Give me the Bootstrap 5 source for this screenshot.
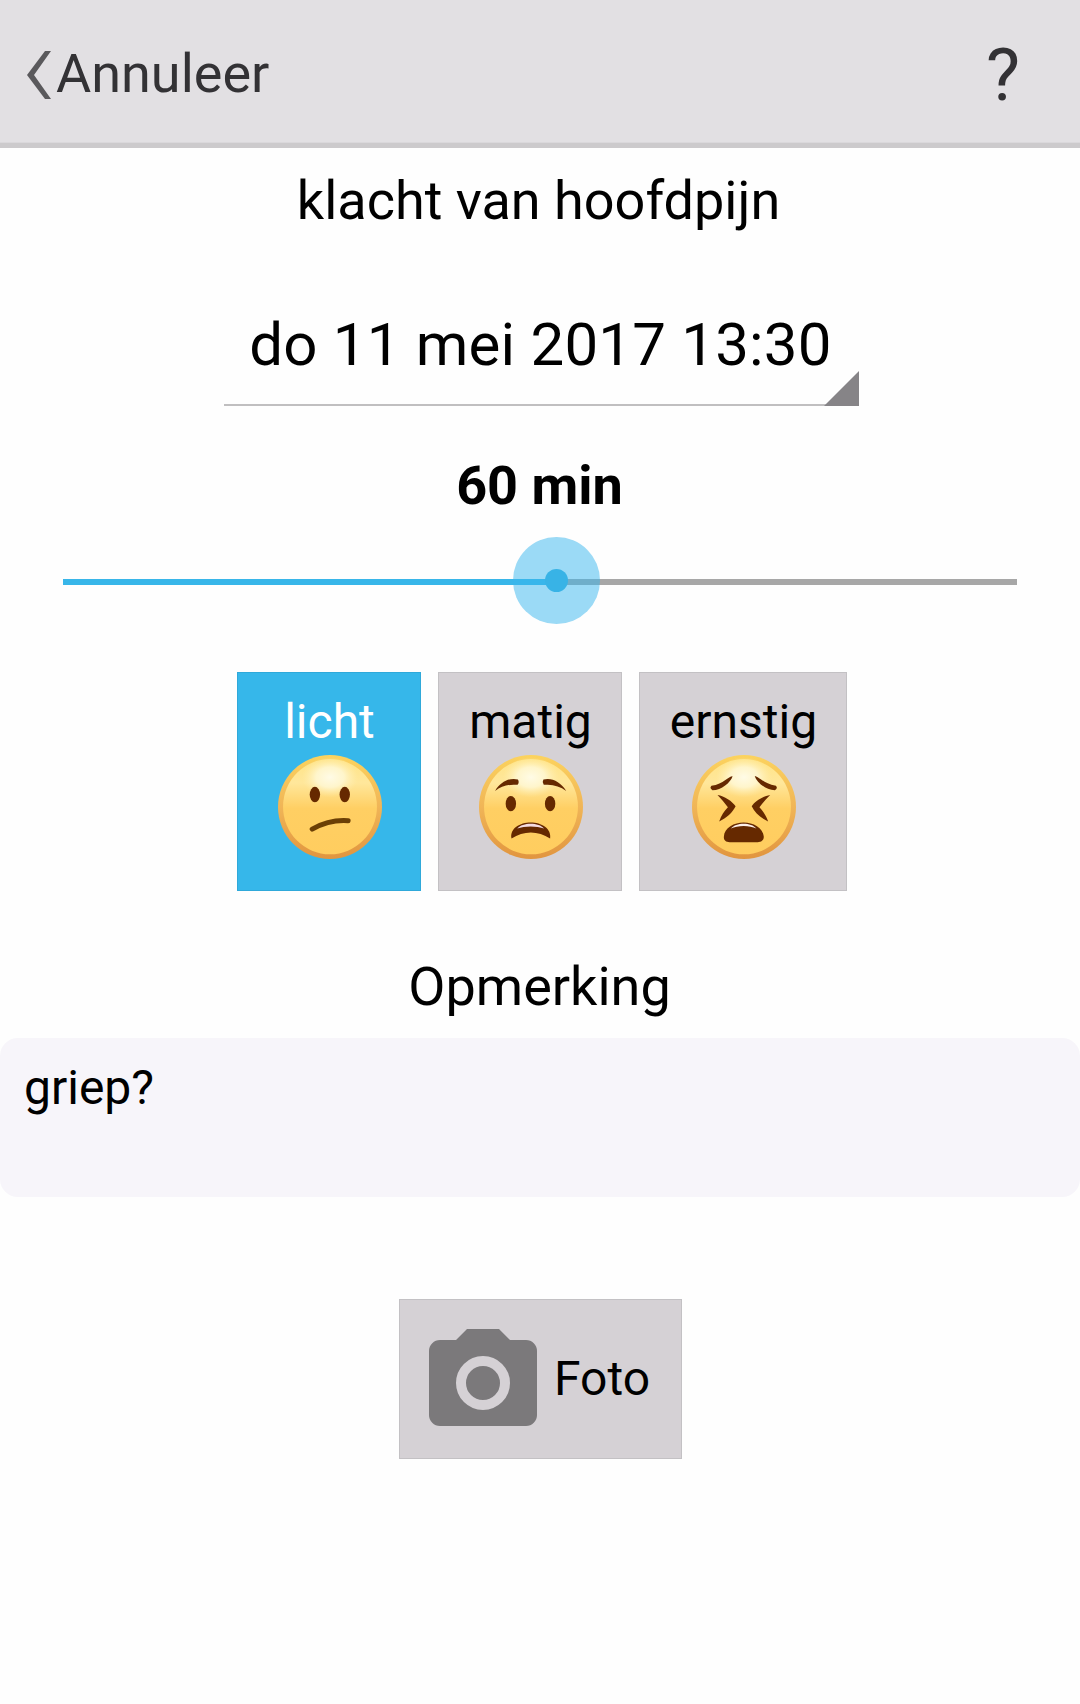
<!DOCTYPE html>
<html lang="nl">
<head>
    <meta charset="UTF-8">
    <meta name="viewport" content="width=device-width, initial-scale=1.0">
    <title>klacht van hoofdpijn</title>
    <link href="https://cdn.jsdelivr.net/npm/bootstrap@5.3.0/dist/css/bootstrap.min.css" rel="stylesheet">
    <style>
        body {
            font-family: Roboto, "Liberation Sans", sans-serif;
            font-size: 48px;
            line-height: 60px;
            color: #000;
            background-color: #fefefe;
            overflow: hidden;
        }
        .topbar {
            height: 148px;
            padding: 0 60px 0 26px;
            background-color: #e2e0e3;
            border-bottom: 5px solid #cccacc;
            box-shadow: inset 0 -1px 0 #dad8db;
            color: #333235;
        }
        .back-link {
            font-size: 54px;
            color: inherit;
            padding-top: 4px;
        }
        .back-link svg {
            margin: 2px 4px 0 0;
        }
        .help-link {
            font-size: 72px;
            color: inherit;
            padding-top: 9px;
        }
        .entry-title {
            font-size: 54px;
            line-height: 106px;
            padding-right: 3px;
        }
        .date-spinner {
            width: 635px;
            height: 152px;
            padding: 54px 2px 23px 0;
            margin-left: 3px;
            font-size: 60px;
            line-height: 73px;
            letter-spacing: .2px;
            border: 0;
            border-bottom: 2px solid #c0bfc0;
            background: none;
        }
        .date-spinner svg {
            right: 0;
            bottom: -2px;
        }
        .duration {
            font-size: 54px;
            line-height: 87px;
            margin-top: 36px;
            padding-right: 1px;
        }
        .slider {
            height: 87px;
            margin-top: 8px;
            padding: 3px 63px 0;
        }
        .slider .progress {
            height: 6px;
            border-radius: 0;
            background-color: #a7a7a7;
            overflow: visible;
        }
        .slider .progress-bar {
            background-color: #38b6e9;
            overflow: visible;
        }
        .thumb {
            right: -44px;
            top: -42px;
            width: 87px;
            height: 87px;
            border-radius: 50%;
            background-color: rgba(56, 182, 238, .5);
        }
        .thumb::after {
            content: "";
            width: 23px;
            height: 23px;
            border-radius: 50%;
            background-color: #38b3e6;
        }
        .severity {
            gap: 17px;
            margin-top: 48px;
            padding-left: 3px;
        }
        .tile {
            border: 1px solid #c3c1c4;
            border-radius: 0;
            background-color: #d5d1d5;
            color: #000;
            font-size: 48px;
            line-height: 60px;
            padding: 0;
        }
        .severity .tile {
            width: 184px;
            height: 219px;
            padding: 19px 0 0 2px;
        }
        .severity .tile-wide {
            width: 208px;
        }
        .severity .tile.active {
            background-color: #36b7ea;
            border-color: #2fa9da;
            color: #fff;
        }
        .face {
            width: 104px;
            height: 104px;
            margin: 3px 0 0 1px;
        }
        .note-label {
            font-size: 54px;
            line-height: 80px;
            margin-top: 56px;
            padding-right: 1px;
        }
        .note-field {
            height: 159px;
            margin-top: 11px;
            padding: 20px 24px;
            border: 0;
            border-radius: 18px;
            background-color: #f7f5fa;
            color: #000;
            font-size: 48px;
            line-height: 60px;
            resize: none;
        }
        .photo-btn {
            width: 283px;
            height: 160px;
            margin-top: 102px;
            padding-right: 1px;
            gap: 17px;
        }
        .photo-btn svg {
            margin-bottom: 3px;
        }
    </style>
</head>
<body>
    <!-- gradients and face shape shared by the severity icons -->
    <svg class="position-absolute" width="0" height="0" aria-hidden="true">
        <defs>
            <linearGradient id="rim" x1="0" y1="0" x2="0" y2="1">
                <stop offset="0" stop-color="#fcd35e"/>
                <stop offset=".5" stop-color="#f0b557"/>
                <stop offset="1" stop-color="#e1953f"/>
            </linearGradient>
            <linearGradient id="skin" x1="0" y1="0" x2="0" y2="1">
                <stop offset="0" stop-color="#ffe487"/>
                <stop offset=".25" stop-color="#ffe79b"/>
                <stop offset=".52" stop-color="#ffcf63"/>
                <stop offset="1" stop-color="#ffcd5f"/>
            </linearGradient>
            <radialGradient id="shine">
                <stop offset="0" stop-color="#fffbe6"/>
                <stop offset=".5" stop-color="#fff8d5" stop-opacity=".85"/>
                <stop offset="1" stop-color="#ffeeb0" stop-opacity="0"/>
            </radialGradient>
            <symbol id="head" viewBox="0 0 310 310">
                <circle cx="155" cy="155" r="155" fill="url(#rim)"/>
                <ellipse cx="155" cy="154" rx="140" ry="142" fill="url(#skin)"/>
                <ellipse cx="155" cy="66" rx="84" ry="60" fill="url(#shine)"/>
            </symbol>
        </defs>
    </svg>

    <nav class="topbar d-flex align-items-center justify-content-between">
        <a href="#" class="back-link d-flex align-items-center text-decoration-none">
            <svg width="26" height="48" viewBox="0 0 26 48"><path d="M19 0h6L8 24l17 24h-6L1 24z" fill="#5a595c"/></svg>
            <span>Annuleer</span>
        </a>
        <a href="#" class="help-link text-decoration-none">?</a>
    </nav>

    <main class="d-flex flex-column align-items-center">
        <div class="entry-title">klacht van hoofdpijn</div>

        <button type="button" class="date-spinner position-relative text-center text-nowrap">
            do 11 mei 2017 13:30
            <svg class="position-absolute" width="35" height="35" viewBox="0 0 35 35"><path d="M35 0v35H0z" fill="#868487"/></svg>
        </button>

        <div class="duration fw-bold">60 min</div>
        <div class="slider w-100 d-flex flex-column justify-content-center">
            <div class="progress">
                <div class="progress-bar position-relative" style="width: 51.7%">
                    <span class="thumb position-absolute d-flex align-items-center justify-content-center"></span>
                </div>
            </div>
        </div>

        <div class="severity d-flex">
            <button type="button" class="btn tile active d-flex flex-column align-items-center">
                <span>licht</span>
                <svg class="face" viewBox="0 0 310 310">
                    <use href="#head"/>
                    <g fill="#662900">
                        <ellipse cx="110" cy="118" rx="15.500" ry="23"/>
                        <ellipse cx="199" cy="118" rx="15.500" ry="23"/>
                    </g>
                    <path d="M102 221Q154 192 209 196" fill="none" stroke="#6b3f05" stroke-width="15" stroke-linecap="round"/>
                </svg>
            </button>
            <button type="button" class="btn tile d-flex flex-column align-items-center">
                <span>matig</span>
                <svg class="face" viewBox="0 0 310 310">
                    <use href="#head"/>
                    <g fill="#662900">
                        <path d="M48 107C64 80 92 66 116 73Q121 81 115 89C89 86 67 93 48 107z"/>
                        <path d="M260 107C244 80 216 66 192 73Q187 81 193 89C219 86 241 93 260 107z"/>
                        <ellipse cx="95" cy="145" rx="15.500" ry="23"/>
                        <ellipse cx="212" cy="145" rx="15.500" ry="23"/>
                        <path d="M97 249C91 219 122 201 154 201S217 219 212 249C176 225 133 225 97 249z"/>
                    </g>
                    <path d="M114 219C130 200 178 200 194 219C172 211 136 211 114 219z" fill="#f5dce2"/>
                </svg>
            </button>
            <button type="button" class="btn tile tile-wide d-flex flex-column align-items-center">
                <span>ernstig</span>
                <svg class="face" viewBox="0 0 310 310">
                    <use href="#head"/>
                    <g fill="#662900">
                        <path d="M121 63C108 63 95 86 58 92Q51 99 61 105C88 104 115 82 121 63z"/>
                        <path d="M187 63C200 63 213 86 250 92Q257 99 247 105C220 104 193 82 187 63z"/>
                        <path d="M76 119C96 122 121 138 130 153C121 172 103 188 81 198C87 181 96 167 107 156C98 143 87 130 76 119z"/>
                        <path d="M233 119C213 122 187 138 178 153C187 172 205 188 227 198C221 181 212 167 201 156C210 143 222 130 233 119z"/>
                        <path d="M95 244C96 216 126 201 154 201S212 216 214 244C214 255 206 260 196 260H112C102 260 94 255 95 244z"/>
                    </g>
                    <path d="M116 219C132 200 176 200 192 219C172 209 136 209 116 219z" fill="#fdf0ea"/>
                </svg>
            </button>
        </div>

        <label for="note" class="note-label">Opmerking</label>
        <textarea id="note" class="note-field form-control">griep?</textarea>

        <button type="button" class="btn tile photo-btn d-flex align-items-center justify-content-center">
            <svg width="108" height="97" viewBox="0 0 108 97">
                <path d="M38 0h32l11 11h16a11 11 0 0 1 11 11v64a11 11 0 0 1-11 11H11A11 11 0 0 1 0 86V22a11 11 0 0 1 11-11h16z" fill="#7b797b"/>
                <circle cx="54" cy="54" r="22" fill="none" stroke="#d5d1d5" stroke-width="10"/>
            </svg>
            <span>Foto</span>
        </button>
    </main>

    <script src="https://cdn.jsdelivr.net/npm/bootstrap@5.3.0/dist/js/bootstrap.bundle.min.js"></script>
</body>
</html>
